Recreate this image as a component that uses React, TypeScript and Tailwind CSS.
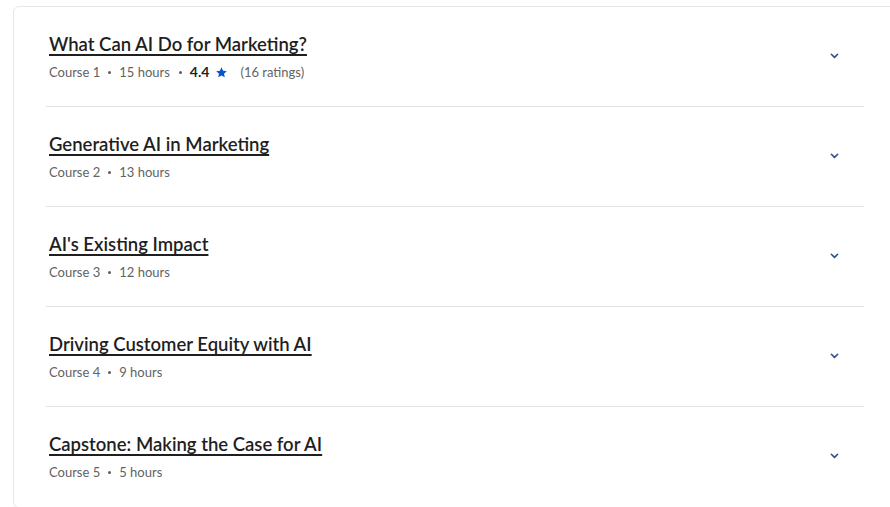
import React from 'react'

interface Course {
  title: string
  index: number
  hours: number
  rating?: number
  ratings?: number
}

const courses: Course[] = [
  { title: 'What Can AI Do for Marketing?', index: 1, hours: 15, rating: 4.4, ratings: 16 },
  { title: 'Generative AI in Marketing', index: 2, hours: 13 },
  { title: "AI's Existing Impact", index: 3, hours: 12 },
  { title: 'Driving Customer Equity with AI', index: 4, hours: 9 },
  { title: 'Capstone: Making the Case for AI', index: 5, hours: 5 },
]

function Dot() {
  return <span className="mx-[8px] inline-block h-[3px] w-[3px] rounded-full bg-[#5b5b5b]" />
}

function CourseRow({ course, last }: { course: Course; last: boolean }) {
  return (
    <div className={`flex h-[100px] items-start ${last ? '' : 'border-b border-[#e3e3e3]'}`}>
      <div className="flex-1 pl-[3px] pt-[25px]">
        <div className="text-[18.5px] font-semibold leading-[24px] text-[#1f1f1f] underline decoration-[1.5px] underline-offset-[3px]">
          {course.title}
        </div>
        <div className="mt-[6px] flex items-center text-[13px] leading-[20px] text-[#636363]">
          <span>Course {course.index}</span>
          <Dot />
          <span>{course.hours} hours</span>
          {course.rating !== undefined && (
            <>
              <span className="ml-[9px] mr-[8px] inline-block h-[3px] w-[3px] rounded-full bg-[#5b5b5b]" />
              <span className="text-[14px] font-bold text-[#1f1f1f]">{course.rating}</span>
              <svg viewBox="0 0 24 24" className="ml-[6px] h-[13px] w-[13px]" fill="#0056d2">
                <path d="M12 2.5l2.9 6.3 6.9.7-5.2 4.6 1.5 6.8L12 17.4l-6.1 3.5 1.5-6.8-5.2-4.6 6.9-.7z" />
              </svg>
              <span className="ml-[12px]">({course.ratings} ratings)</span>
            </>
          )}
        </div>
      </div>
      <div className="flex w-[60px] justify-center pt-[41px]">
        <svg viewBox="0 0 24 24" className="h-[15px] w-[15px]" fill="none" stroke="#2d4f8f" strokeWidth={2.6} strokeLinecap="round" strokeLinejoin="round">
          <path d="M7 10l5 5 5-5" />
        </svg>
      </div>
    </div>
  )
}

export default function App() {
  return (
    <div className="min-h-screen bg-white pl-[13px] pt-[6px]" style={{ fontFamily: 'Lato, "Noto Sans", sans-serif' }}>
      <div className="w-[900px] rounded-[6px] border border-[#e6e6e6] bg-white pl-[32px]">
        <div className="w-[818px]">
          {courses.map((c, i) => (
            <CourseRow key={c.index} course={c} last={i === courses.length - 1} />
          ))}
        </div>
      </div>
    </div>
  )
}
